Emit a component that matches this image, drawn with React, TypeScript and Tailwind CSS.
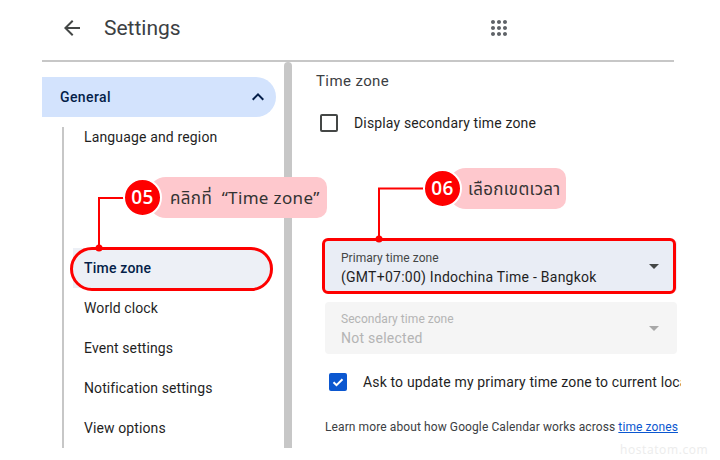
import React from 'react';

const NAV_ITEMS = ['World clock', 'Event settings', 'Notification settings', 'View options'];

const Caret: React.FC<{ color: string }> = ({ color }) => (
  <svg width="10" height="5" viewBox="0 0 10 5" className="shrink-0">
    <path d="M0 0h10L5 5z" fill={color} />
  </svg>
);

const Callout: React.FC<{ num: string; text: string; className: string; textClass: string }> = ({ num, text, className, textClass }) => (
  <div className={`absolute flex h-[41px] items-center rounded-r-[10px] rounded-l-[18px] bg-[#fec8cd] ${className}`}>
    <div className="ml-[-25px] flex h-[39px] w-[39px] shrink-0 items-center justify-center rounded-full border-2 border-white bg-[#fe0000] font-['Open_Sans',sans-serif] text-[19px] font-semibold tracking-[0.5px] text-white">
      {num}
    </div>
    <span className={`whitespace-pre font-['Noto_Sans','Noto_Sans_Thai','DejaVu_Sans',sans-serif] text-[17px] text-[#333333] ${textClass}`}>
      {text}
    </span>
  </div>
);

export default function App() {
  return (
    <div className="relative h-[460px] w-[720px] overflow-hidden bg-white font-['Roboto',sans-serif] text-[#1f1f1f]">
      <header className="flex h-[60px] items-center pb-[4px] pl-[60px]">
        <svg width="24" height="24" viewBox="0 0 24 24" className="fill-[#444746]">
          <path d="M20 11H7.83l5.59-5.59L12 4l-8 8 8 8 1.41-1.41L7.83 13H20v-2z" />
        </svg>
        <h1 className="ml-[20px] mt-[1px] text-[21px] text-[#3c4043]">Settings</h1>
        <svg width="24" height="24" viewBox="0 0 24 24" className="ml-[306px] fill-[#5f6368]">
          <path d="M6 8c1.1 0 2-.9 2-2s-.9-2-2-2-2 .9-2 2 .9 2 2 2zm6 12c1.1 0 2-.9 2-2s-.9-2-2-2-2 .9-2 2 .9 2 2 2zm-6 0c1.1 0 2-.9 2-2s-.9-2-2-2-2 .9-2 2 .9 2 2 2zm0-6c1.1 0 2-.9 2-2s-.9-2-2-2-2 .9-2 2 .9 2 2 2zm6 0c1.1 0 2-.9 2-2s-.9-2-2-2-2 .9-2 2 .9 2 2 2zm4-8c0 1.1.9 2 2 2s2-.9 2-2-.9-2-2-2-2 .9-2 2zm-4 2c1.1 0 2-.9 2-2s-.9-2-2-2-2 .9-2 2 .9 2 2 2zm6 6c1.1 0 2-.9 2-2s-.9-2-2-2-2 .9-2 2 .9 2 2 2zm0 6c1.1 0 2-.9 2-2s-.9-2-2-2-2 .9-2 2 .9 2 2 2z" />
        </svg>
      </header>

      <div className="ml-[42px] flex h-[388px] w-[632px] border-t-2 border-[#c7c7c7]">
        <nav className="w-[242px] shrink-0 pt-[15px]">
          <div className="flex h-[40px] w-[234px] items-center justify-between rounded-r-[20px] bg-[#d3e3fd] pl-[18px] pr-[6px] text-[14px] font-medium tracking-[0.4px] text-[#041e49]">
            General
            <svg width="24" height="24" viewBox="0 0 24 24" className="fill-[#041e49]">
              <path d="M12 8l-6 6 1.41 1.41L12 10.83l4.59 4.58L18 14z" />
            </svg>
          </div>
          <div className="ml-[20px] mt-[10px] h-[321px] border-l-2 border-[#c7c7c7]">
            <div className="flex h-[20px] items-center pl-[20px] text-[14px] tracking-[0.15px]">Language and region</div>
            <div className="ml-[9px] mt-[101px] flex h-[40px] w-[200px] items-center rounded-r-[20px] bg-[#edf0f6] pl-[11px] text-[14px] font-medium tracking-[0.2px] text-[#041e49]">
              Time zone
            </div>
            {NAV_ITEMS.map((item) => (
              <div key={item} className="flex h-[40px] items-center pl-[20px] text-[14px] tracking-[0.1px]">
                {item}
              </div>
            ))}
          </div>
        </nav>

        <div className="w-[8px] shrink-0 rounded-t-[4px] bg-[#c7c7c7]" />

        <main className="w-[382px] shrink-0 overflow-visible pl-[25px]">
          <h2 className="ml-[-1px] mt-[9px] text-[15px] leading-[20px] tracking-[0.4px] text-[#3c4043]">Time zone</h2>
          <label className="ml-[3px] mt-[23px] flex h-[18px] items-center">
            <span className="h-[18px] w-[18px] shrink-0 rounded-[2px] border-2 border-[#444746]" />
            <span className="ml-[16px] text-[14px] tracking-[0.15px]">Display secondary time zone</span>
          </label>

          <div className="ml-[8px] mt-[108px] flex h-[52px] w-[352px] items-center justify-between rounded-[4px] bg-[#e9edf5] pl-[16px] pr-[18px]">
            <div className="pt-[5px]">
              <div className="text-[12px] leading-[16px] tracking-[0.05px] text-[#444746]">Primary time zone</div>
              <div className="text-[14px] leading-[22px] tracking-[0.25px]">(GMT+07:00) Indochina Time - Bangkok</div>
            </div>
            <Caret color="#444746" />
          </div>

          <div className="ml-[8px] mt-[10px] flex h-[52px] w-[352px] items-center justify-between rounded-[4px] bg-[#f5f5f5] pl-[16px] pr-[18px]">
            <div className="pt-[3px]">
              <div className="text-[12px] leading-[16px] tracking-[0.05px] text-[#b4b4b4]">Secondary time zone</div>
              <div className="text-[14px] leading-[22px] tracking-[0.25px] text-[#b4b4b4]">Not selected</div>
            </div>
            <Caret color="#a8a8a8" />
          </div>

          <div className="ml-[12px] mt-[19px] flex h-[18px] w-[352px] items-center overflow-hidden">
            <span className="flex h-[18px] w-[18px] shrink-0 items-center justify-center rounded-[2px] bg-[#0b57d0]">
              <svg width="14" height="14" viewBox="0 0 14 14" fill="none" stroke="white" strokeWidth="2">
                <path d="M2.500 7.200l3 3 6-6" />
              </svg>
            </span>
            <span className="ml-[16px] whitespace-nowrap text-[14px] tracking-[0.15px]">
              Ask to update my primary time zone to current location
            </span>
          </div>

          <p className="ml-[8px] mt-[27px] w-[354px] whitespace-nowrap text-[12px] leading-[18px] tracking-[0.1px] text-[#3c4043]">
            Learn more about how Google Calendar works across{' '}
            <a className="text-[#0b57d0] underline">time zones</a>
          </p>
        </main>
      </div>

      {/* annotation lines over the page */}
      <div className="absolute left-[70px] top-[247px] h-[44px] w-[203px] rounded-[22px] border-[3px] border-[#fe0000]" />
      <div className="absolute left-[322px] top-[238px] h-[56px] w-[354px] rounded-[6px] border-[3px] border-[#fe0000]" />
      <svg width="720" height="460" className="pointer-events-none absolute left-0 top-0" fill="none" stroke="#fe0000" strokeWidth="2">
        <path d="M124 198H99v50" />
        <circle cx="99" cy="248" r="3.500" fill="#fe0000" stroke="none" />
        <path d="M424 188.500H379v50" />
        <circle cx="379" cy="239" r="3.500" fill="#fe0000" stroke="none" />
      </svg>
      <Callout num="05" text="คลิกที่  “Time zone”" className="left-[148px] top-[177px] w-[179px]" textClass="ml-[8px] tracking-[0.35px]" />
      <Callout num="06" text="เลือกเขตเวลา" className="left-[448px] top-[168px] w-[118px]" textClass="ml-[6px] tracking-[0.3px]" />

      <div className="absolute left-[620px] top-[441px] font-['Open_Sans',sans-serif] text-[12px] tracking-[0.6px] text-[#ececec]">
        hostatom.com
      </div>
    </div>
  );
}
